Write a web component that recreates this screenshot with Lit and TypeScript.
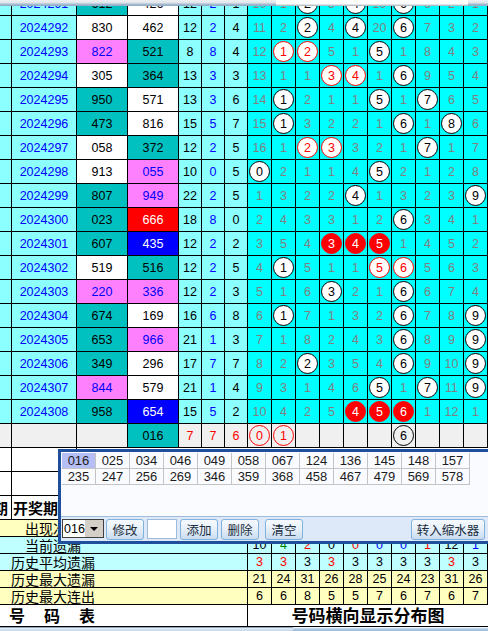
import { LitElement, html, css } from "lit";
import { customElement } from "lit/decorators.js";

type Row = [string, string, string, string, string, string, string, string, string];

const ROWS: Row[] = [
  ["2024291", "612", "t", "426", "w", "12", "2", "1", "10 1 c2 3 c4 19 c6 6 2 1"],
  ["2024292", "830", "w", "462", "w", "12", "2", "4", "11 2 c2 4 c4 20 c6 7 3 2"],
  ["2024293", "822", "p", "521", "t", "8", "8", "4", "12 r1 r2 5 1 c5 1 8 4 3"],
  ["2024294", "305", "w", "364", "t", "13", "3", "3", "13 1 1 r3 r4 1 c6 9 5 4"],
  ["2024295", "950", "t", "571", "w", "13", "3", "6", "14 c1 2 1 1 c5 1 c7 6 5"],
  ["2024296", "473", "t", "816", "w", "15", "5", "7", "15 c1 3 2 2 1 c6 1 c8 6"],
  ["2024297", "058", "w", "372", "t", "12", "2", "5", "16 1 r2 r3 3 2 1 c7 1 7"],
  ["2024298", "913", "w", "055", "p", "10", "0", "5", "c0 2 1 1 4 c5 2 1 2 8"],
  ["2024299", "807", "t", "949", "p", "22", "2", "5", "1 3 2 2 c4 1 3 2 3 c9"],
  ["2024300", "023", "t", "666", "r", "18", "8", "0", "2 4 3 3 1 2 c6 3 4 1"],
  ["2024301", "607", "t", "435", "b", "12", "2", "2", "3 5 4 f3 f4 f5 1 4 5 2"],
  ["2024302", "519", "w", "516", "t", "12", "2", "5", "4 c1 5 1 1 r5 r6 5 6 3"],
  ["2024303", "220", "p", "336", "p", "12", "2", "3", "5 1 6 c3 2 1 c6 6 7 4"],
  ["2024304", "674", "t", "169", "w", "16", "6", "8", "6 c1 7 1 3 2 c6 7 8 c9"],
  ["2024305", "653", "t", "966", "p", "21", "1", "3", "7 1 8 2 4 3 c6 8 9 c9"],
  ["2024306", "349", "t", "296", "w", "17", "7", "7", "8 2 c2 3 5 4 c6 9 10 c9"],
  ["2024307", "844", "p", "579", "w", "21", "1", "4", "9 3 1 4 6 c5 1 c7 11 c9"],
  ["2024308", "958", "t", "654", "b", "15", "5", "2", "10 4 2 5 f4 f5 f6 1 12 1"],
];

const LIST = [
  "016", "025", "034", "046", "049", "058", "067", "124", "136", "145", "148", "157",
  "235", "247", "256", "269", "346", "359", "368", "458", "467", "479", "569", "578",
];

const STATS: { label: string; cls: string; indent: boolean; vals: [string, string][] }[] = [
  { label: "出现次数", cls: "yellow", indent: true, vals: "- - - - - - - - - -".split(" ").map(() => ["", "k"]) },
  {
    label: "当前遗漏", cls: "aqua", indent: true,
    vals: [["10", "k"], ["4", "g"], ["2", "rd"], ["0", "k"], ["0", "rd"], ["0", "bl"], ["0", "bl"], ["1", "rd"], ["12", "k"], ["1", "bl"]],
  },
  {
    label: "历史平均遗漏", cls: "aqua", indent: false,
    vals: [["3", "rd"], ["3", "rd"], ["3", "k"], ["3", "rd"], ["3", "k"], ["3", "k"], ["3", "k"], ["3", "k"], ["3", "rd"], ["3", "k"]],
  },
  { label: "历史最大遗漏", cls: "yellow", indent: false, vals: "21 24 31 26 28 25 24 23 31 26".split(" ").map((v) => [v, "k"]) },
  { label: "历史最大连出", cls: "yellow", indent: false, vals: "6 6 8 5 5 7 6 7 6 7".split(" ").map((v) => [v, "k"]) },
];

@customElement("app-root")
export class AppRoot extends LitElement {
  static styles = css`
    :host {
      display: block;
      position: relative;
      width: 488px;
      height: 631px;
      overflow: hidden;
      background: #fff;
      font-family: "Liberation Sans", "Noto Sans CJK SC", sans-serif;
      font-size: 12.5px;
      color: #000;
    }
    .chrome-top { display: flex; height: 6px; }
    .ct-side { background: linear-gradient(#eef0f2 0%, #dfe5ea 45%, #a9bdd2 70%, #8ea8c4 100%); }
    .ct-l { width: 276px; }
    .ct-r { width: 20px; }
    .ct-m { flex: 1; background: linear-gradient(#fff 0%, #fff 60%, #d4d9de 80%, #a4acb4 100%); }
    .clip { height: 10px; overflow: hidden; display: flex; flex-direction: column; justify-content: flex-end; }
    .row {
      display: grid;
      grid-template-columns: 12px 65px 51px 51px 23px 23px 23px repeat(10, 24px);
      height: 24px;
      flex: none;
      box-sizing: border-box;
      border-bottom: 1px solid #000;
    }
    .cell {
      display: flex;
      align-items: center;
      justify-content: center;
      box-sizing: border-box;
      border-right: 1px solid #000;
      overflow: hidden;
      white-space: nowrap;
    }
    .light { background: #8cffff; }
    .cyan { background: #00ffff; }
    .gray { background: #f0f0f0; }
    .white { background: #fff; }
    .w { background: #fff; }
    .t { background: #00c0c0; }
    .p { background: #ff80ff; color: #0000ff; }
    .r { background: #ff0000; color: #fff; }
    .b { background: #0000ff; color: #fff; }
    .blue { color: #0000ff; }
    .red { color: #ff0000; }
    .miss { color: #808080; }
    .ball {
      width: 21px;
      height: 21px;
      flex: none;
      box-sizing: border-box;
      border-radius: 50%;
      display: flex;
      align-items: center;
      justify-content: center;
      border: 1px solid #000;
      background: #fff;
      color: #000;
    }
    .ball.ro { border-color: #ff0000; color: #ff0000; }
    .ball.rf { border-color: #ff0000; background: #ff0000; color: #fff; }
    .ball.hollow { background: transparent; }
    .blank { display: grid; grid-template-columns: 12px 65px 1fr; }
    .blank.two { grid-template-columns: 12px 1fr; }
    .head { font-family: "Noto Sans CJK SC", sans-serif; font-size: 15px; font-weight: 700; }
    .head .cell { justify-content: flex-start; }
    .head .stub { justify-content: flex-end; padding-right: 3px; }
    .head .name { padding-left: 1px; }
    .stat { height: 17px; }
    .label {
      grid-column: 1 / 8;
      justify-content: flex-start;
      padding-left: 11px;
      font-family: "Noto Sans CJK SC", sans-serif;
      font-size: 14px;
    }
    .label.indent { padding-left: 25px; }
    .yellow { background: #ffffc0; }
    .aqua { background: #c0ffff; }
    .k { color: #000; }
    .g { color: #008000; }
    .rd { color: #ff0000; }
    .bl { color: #0000ff; }
    .title {
      display: grid;
      grid-template-columns: 248px 240px;
      height: 22px;
      box-sizing: border-box;
      border-bottom: 1px solid #000;
      font-family: "Noto Sans CJK SC", sans-serif;
      font-weight: 700;
    }
    .t-left { justify-content: flex-start; padding: 0 0 2px 9px; font-size: 16px; letter-spacing: 19px; }
    .t-right { border-right: none; padding-bottom: 2px; font-size: 17px; }
    .chrome-bottom { display: flex; height: 4px; }
    .cb-tab { width: 293px; background: linear-gradient(#e4ecf4, #c6d6e6); border-top: 1px solid #8ea8c4; }
    .cb-rest { flex: 1; background: linear-gradient(#fff, #b4cce4 50%, #9cb8d4); }

    .popup {
      position: absolute;
      left: 58px;
      top: 449px;
      width: 434px;
      height: 95px;
      box-sizing: border-box;
      border: 3px solid #1f4e9c;
      background: #fafbff;
      display: flex;
      flex-direction: column;
      font-size: 13px;
      color: #1c1c1c;
    }
    .list {
      height: 65px;
      box-sizing: border-box;
      padding: 1px 0 0 1px;
      border-bottom: 1px solid #9dbbdc;
      display: grid;
      grid-template-columns: repeat(12, 34px);
      grid-auto-rows: 16px;
    }
    .item {
      display: flex;
      align-items: center;
      justify-content: center;
      box-sizing: border-box;
      border-right: 1px solid #c4c4c4;
      border-bottom: 1px solid #c4c4c4;
    }
    .item.sel { background: #b6bef6; }
    .tools {
      flex: 1;
      background: #dde8f8;
      display: flex;
      align-items: flex-start;
      padding: 2px 0 0 1px;
      gap: 3px;
    }
    .combo {
      width: 42px;
      height: 19px;
      box-sizing: border-box;
      border: 1px solid #404040;
      background: #fff;
      display: flex;
      margin-right: -1px;
      font-size: 12.5px;
    }
    .combo-val { flex: 1; display: flex; align-items: center; padding-left: 1px; color: #000; }
    .combo-btn {
      width: 18px;
      background: #d4d0c8;
      display: flex;
      align-items: center;
      justify-content: center;
    }
    .arrow { width: 0; height: 0; border-left: 4px solid transparent; border-right: 4px solid transparent; border-top: 4px solid #000; }
    .btn {
      width: 38px;
      height: 21px;
      padding: 0;
      box-sizing: border-box;
      border: 1px solid #7fb2dc;
      border-radius: 3px;
      background: linear-gradient(#f6fafe, #e6eff9 50%, #c8dcf0);
      font-family: "Noto Sans CJK SC", sans-serif;
      font-size: 12.5px;
      color: #1c2e40;
    }
    .btn.wide { width: 74px; margin-left: auto; margin-right: 4px; }
    .btn.gapped { margin-left: 3px; }
    .entry {
      width: 30px;
      height: 20px;
      padding: 0;
      box-sizing: border-box;
      border: 1px solid #9dbbdc;
      background: #fff;
    }
  `;

  private dist(v: string) {
    const k = v[0];
    if (k === "c") return html`<div class="cell cyan"><span class="ball">${v[1]}</span></div>`;
    if (k === "r") return html`<div class="cell cyan"><span class="ball ro">${v[1]}</span></div>`;
    if (k === "f") return html`<div class="cell cyan"><span class="ball rf">${v[1]}</span></div>`;
    return html`<div class="cell cyan miss">${v}</div>`;
  }

  private row(r: Row) {
    return html`<div class="row">
      <div class="cell light"></div>
      <div class="cell light blue">${r[0]}</div>
      <div class="cell ${r[2]}">${r[1]}</div>
      <div class="cell ${r[4]}">${r[3]}</div>
      <div class="cell light">${r[5]}</div>
      <div class="cell light blue">${r[6]}</div>
      <div class="cell light">${r[7]}</div>
      ${r[8].split(" ").map((v) => this.dist(v))}
    </div>`;
  }

  render() {
    return html`
      <div class="chrome-top">
        <div class="ct-side ct-l"></div>
        <div class="ct-m"></div>
        <div class="ct-side ct-r"></div>
      </div>
      <div class="clip">${this.row(ROWS[0])}</div>
      ${ROWS.slice(1).map((r) => this.row(r))}
      <div class="row gray">
        <div class="cell"></div>
        <div class="cell"></div>
        <div class="cell"></div>
        <div class="cell t">016</div>
        <div class="cell red">7</div>
        <div class="cell red">7</div>
        <div class="cell red">6</div>
        <div class="cell"><span class="ball ro hollow">0</span></div>
        <div class="cell"><span class="ball ro hollow">1</span></div>
        <div class="cell"></div>
        <div class="cell"></div>
        <div class="cell"></div>
        <div class="cell"></div>
        <div class="cell"><span class="ball hollow">6</span></div>
        <div class="cell"></div>
        <div class="cell"></div>
        <div class="cell"></div>
      </div>
      <div class="row blank">
        <div class="cell"></div>
        <div class="cell"></div>
        <div></div>
      </div>
      <div class="row blank two">
        <div class="cell"></div>
        <div></div>
      </div>
      <div class="row blank two head">
        <div class="cell stub">期</div>
        <div class="cell name">开奖期号</div>
      </div>
      ${STATS.map(
        (s) => html`<div class="row stat ${s.cls}">
          <div class="cell label ${s.indent ? "indent" : ""}">${s.label}</div>
          ${s.vals.map(([v, c]) => html`<div class="cell ${c}">${v}</div>`)}
        </div>`
      )}
      <div class="title">
        <div class="cell t-left">号码表</div>
        <div class="cell t-right">号码横向显示分布图</div>
      </div>
      <div class="chrome-bottom">
        <div class="cb-tab"></div>
        <div class="cb-rest"></div>
      </div>

      <div class="popup">
        <div class="list">
          ${LIST.map((v, i) => html`<div class="item ${i === 0 ? "sel" : ""}">${v}</div>`)}
        </div>
        <div class="tools">
          <div class="combo">
            <div class="combo-val">016</div>
            <div class="combo-btn"><span class="arrow"></span></div>
          </div>
          <button class="btn">修改</button>
          <input class="entry" />
          <button class="btn">添加</button>
          <button class="btn">删除</button>
          <button class="btn gapped">清空</button>
          <button class="btn wide">转入缩水器</button>
        </div>
      </div>
    `;
  }
}
